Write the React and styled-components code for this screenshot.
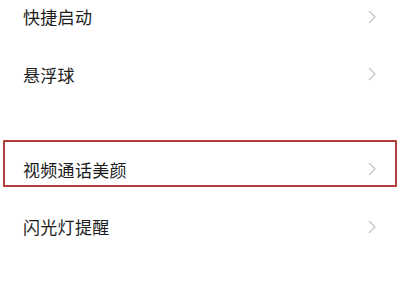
import React from 'react'
import styled, { createGlobalStyle } from 'styled-components'

const GlobalStyle = createGlobalStyle`
  html, body {
    margin: 0;
    padding: 0;
    background: #ffffff;
  }
  body {
    width: 400px;
    height: 300px;
    overflow: hidden;
    font-family: "Noto Sans CJK SC", "Noto Sans", sans-serif;
  }
`

const Page = styled.div`
  position: relative;
  width: 400px;
  height: 300px;
  overflow: hidden;
  background: #fff;
`

const List = styled.div`
  display: flex;
  flex-direction: column;
  margin-top: -12px;
`

const Section = styled.div`
  display: flex;
  flex-direction: column;
  margin-bottom: ${(p) => p.gap || 0}px;
`

const Row = styled.div`
  display: flex;
  align-items: center;
  justify-content: space-between;
  height: 57.5px;
  padding: 0 24px 0 23px;
`

const Label = styled.span`
  font-size: 17px;
  color: #1c1c1c;
  letter-spacing: 0.3px;
`

const Chevron = styled.svg`
  width: 8px;
  height: 14px;
  flex: none;
`

// 截图上的红色标注框
const Highlight = styled.div`
  position: absolute;
  left: 3px;
  top: 140px;
  width: 390px;
  height: 43px;
  border: 2px solid #b23d3a;
  border-radius: 1px;
  pointer-events: none;
`

const sections = [
  ['快捷启动', '悬浮球'],
  ['视频通话美颜', '闪光灯提醒'],
]

function Arrow() {
  return (
    <Chevron viewBox="0 0 8 14">
      <path d="M1 1 L7 7 L1 13" fill="none" stroke="#c4c4c4" strokeWidth="1.3" />
    </Chevron>
  )
}

export default function App() {
  return (
    <>
      <GlobalStyle />
      <Page>
        <List>
          {sections.map((items, i) => (
            <Section key={i} gap={i === 0 ? 37.5 : 0}>
              {items.map((t) => (
                <Row key={t}>
                  <Label>{t}</Label>
                  <Arrow />
                </Row>
              ))}
            </Section>
          ))}
        </List>
        <Highlight />
      </Page>
    </>
  )
}
